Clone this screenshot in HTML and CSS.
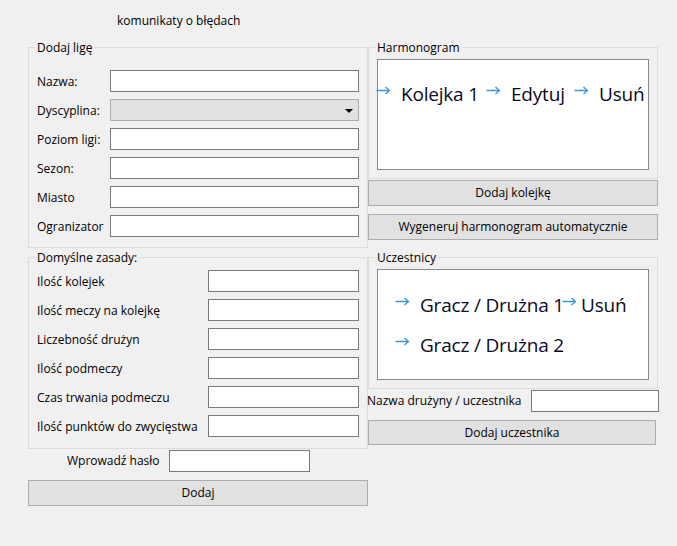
FILE: index.html
```html
<!DOCTYPE html>
<html lang="pl">
<head>
<meta charset="utf-8">
<title>Liga</title>
<link rel="stylesheet" href="styles.css">
</head>
<body>
<div class="window">
  <div class="header">komunikaty o błędach</div>
  <div class="columns">
    <div class="col-left">
      <div class="group g1">
        <div class="group-title">Dodaj ligę</div>
        <div class="form form1">
          <label class="lbl">Nazwa:</label><div class="input"></div>
          <label class="lbl">Dyscyplina:</label><div class="combo"><span class="tri"></span></div>
          <label class="lbl">Poziom ligi:</label><div class="input"></div>
          <label class="lbl">Sezon:</label><div class="input"></div>
          <label class="lbl">Miasto</label><div class="input"></div>
          <label class="lbl">Ogranizator</label><div class="input"></div>
        </div>
      </div>
      <div class="group g2">
        <div class="group-title">Domyślne zasady:</div>
        <div class="form form2">
          <label class="lbl">Ilość kolejek</label><div class="input"></div>
          <label class="lbl">Ilość meczy na kolejkę</label><div class="input"></div>
          <label class="lbl">Liczebność drużyn</label><div class="input"></div>
          <label class="lbl">Ilość podmeczy</label><div class="input"></div>
          <label class="lbl">Czas trwania podmeczu</label><div class="input"></div>
          <label class="lbl">Ilość punktów do zwycięstwa</label><div class="input"></div>
        </div>
      </div>
      <div class="pass-row">
        <label class="pass-lbl">Wprowadź hasło</label><div class="input pass-input"></div>
      </div>
      <div class="btn btn-dodaj">Dodaj</div>
    </div>
    <div class="col-right">
      <div class="group rg">
        <div class="group-title">Harmonogram</div>
        <div class="list list-h">
          <div class="list-row">
            <div class="item ih1"><svg class="arrow" width="15" height="9" viewBox="0 0 15 9"><path d="M0.5 4.5H13.5M9.5 1l4 3.5-4 3.5" fill="none" stroke="#3a96dd" stroke-width="1.3"/></svg><span class="item-text">Kolejka 1</span></div>
            <div class="item ih2"><svg class="arrow" width="15" height="9" viewBox="0 0 15 9"><path d="M0.5 4.5H13.5M9.5 1l4 3.5-4 3.5" fill="none" stroke="#3a96dd" stroke-width="1.3"/></svg><span class="item-text">Edytuj</span></div>
            <div class="item ih3"><svg class="arrow" width="15" height="9" viewBox="0 0 15 9"><path d="M0.5 4.5H13.5M9.5 1l4 3.5-4 3.5" fill="none" stroke="#3a96dd" stroke-width="1.3"/></svg><span class="item-text">Usuń</span></div>
          </div>
        </div>
      </div>
      <div class="btn btn-r btn-kolejka">Dodaj kolejkę</div>
      <div class="btn btn-r btn-gen">Wygeneruj harmonogram automatycznie</div>
      <div class="group rg rg2">
        <div class="group-title">Uczestnicy</div>
        <div class="list list-u">
          <div class="list-row">
            <div class="item iu1"><svg class="arrow" width="15" height="9" viewBox="0 0 15 9"><path d="M0.5 4.5H13.5M9.5 1l4 3.5-4 3.5" fill="none" stroke="#3a96dd" stroke-width="1.3"/></svg><span class="item-text">Gracz / Drużna 1</span></div>
            <div class="item iu2"><svg class="arrow" width="15" height="9" viewBox="0 0 15 9"><path d="M0.5 4.5H13.5M9.5 1l4 3.5-4 3.5" fill="none" stroke="#3a96dd" stroke-width="1.3"/></svg><span class="item-text">Usuń</span></div>
          </div>
          <div class="list-row">
            <div class="item iu1"><svg class="arrow" width="15" height="9" viewBox="0 0 15 9"><path d="M0.5 4.5H13.5M9.5 1l4 3.5-4 3.5" fill="none" stroke="#3a96dd" stroke-width="1.3"/></svg><span class="item-text">Gracz / Drużna 2</span></div>
          </div>
        </div>
      </div>
      <div class="name-row">
        <label class="name-lbl">Nazwa drużyny / uczestnika</label><div class="input name-input"></div>
      </div>
      <div class="btn btn-r btn-uczestnik">Dodaj uczestnika</div>
    </div>
  </div>
</div>
</body>
</html>
```
FILE: styles.css
```css
html, body {
  margin: 0;
  padding: 0;
  background: #f0f0f0;
}
body {
  font-family: "Open Sans", "Noto Sans", sans-serif;
  font-size: 12px;
  color: #000;
}
.window {
  width: 677px;
  height: 546px;
  overflow: hidden;
}
.header {
  padding: 13px 0 0 117px;
  line-height: 16px;
  height: 16px;
}
.columns {
  display: flex;
  margin-top: 18px;
  padding-left: 28px;
}
.col-left {
  width: 340px;
  display: flex;
  flex-direction: column;
}
.col-right {
  width: 290px;
  display: flex;
  flex-direction: column;
}
.group {
  border: 1px solid #dcdcdc;
  display: flex;
  flex-direction: column;
  padding: 0 8px;
}
.group-title {
  margin: -8px 0 0 -2px;
  padding: 0 2px;
  align-self: flex-start;
  line-height: 16px;
  background: #f0f0f0;
}
.form {
  display: grid;
  row-gap: 7px;
  grid-auto-rows: 22px;
  align-items: center;
}
.form1 {
  grid-template-columns: 73px 1fr;
  padding: 14px 0 10px;
}
.form2 {
  grid-template-columns: 171px 1fr;
  padding: 4px 0 11px;
}
.g2 {
  margin-top: 9px;
}
.lbl {
  white-space: nowrap;
  line-height: 16px;
  padding-top: 2px;
}
.input {
  box-sizing: border-box;
  height: 22px;
  background: #fff;
  border: 1px solid #7a7a7a;
}
.combo {
  box-sizing: border-box;
  height: 22px;
  background: #e1e1e1;
  border: 1px solid #adadad;
  display: flex;
  justify-content: flex-end;
  align-items: center;
  padding-right: 5px;
}
.tri {
  width: 0;
  height: 0;
  border-left: 4px solid transparent;
  border-right: 4px solid transparent;
  border-top: 4px solid #000;
  margin-top: 1px;
}
.pass-row {
  display: flex;
  align-items: center;
  margin-top: 1px;
  padding-left: 39px;
}
.pass-lbl {
  width: 102px;
  line-height: 16px;
}
.pass-input {
  width: 141px;
}
.btn {
  box-sizing: border-box;
  background: #e1e1e1;
  border: 1px solid #adadad;
  display: flex;
  align-items: center;
  justify-content: center;
  line-height: 16px;
}
.btn-dodaj {
  margin-top: 8px;
  height: 26px;
}
.list {
  box-sizing: border-box;
  background: #fff;
  border: 1px solid #8a8a8a;
  height: 111px;
  margin: 3px 0 8px;
  display: flex;
  flex-direction: column;
  gap: 12px;
  font-size: 19px;
  letter-spacing: -0.2px;
  line-height: 28px;
  color: #0a0a24;
}
.list-h {
  padding-top: 20px;
}
.list-u {
  padding-top: 21px;
}
.list-row {
  display: flex;
  height: 28px;
}
.item {
  display: flex;
  align-items: flex-start;
  flex: none;
  white-space: nowrap;
}
.arrow {
  flex: none;
  margin-top: 6px;
}
.item-text {
  margin-left: 10px;
}
.ih1 {
  margin-left: -2px;
  width: 110px;
}
.ih2 {
  width: 88px;
}
.iu1 {
  margin-left: 17px;
  width: 167px;
}
.iu2 .item-text {
  margin-left: 4px;
}
.btn-r {
  height: 26px;
}
.btn-kolejka {
  margin-top: 1px;
}
.btn-gen {
  margin-top: 8px;
}
.rg2 {
  margin-top: 17px;
}
.name-row {
  display: flex;
  align-items: center;
  margin: 1px 0 0 -1px;
  width: 292px;
}
.name-lbl {
  flex: 1;
  white-space: nowrap;
  line-height: 16px;
}
.name-input {
  width: 128px;
}
.btn-uczestnik {
  margin-top: 8px;
  width: 288px;
  height: 25px;
}
```
